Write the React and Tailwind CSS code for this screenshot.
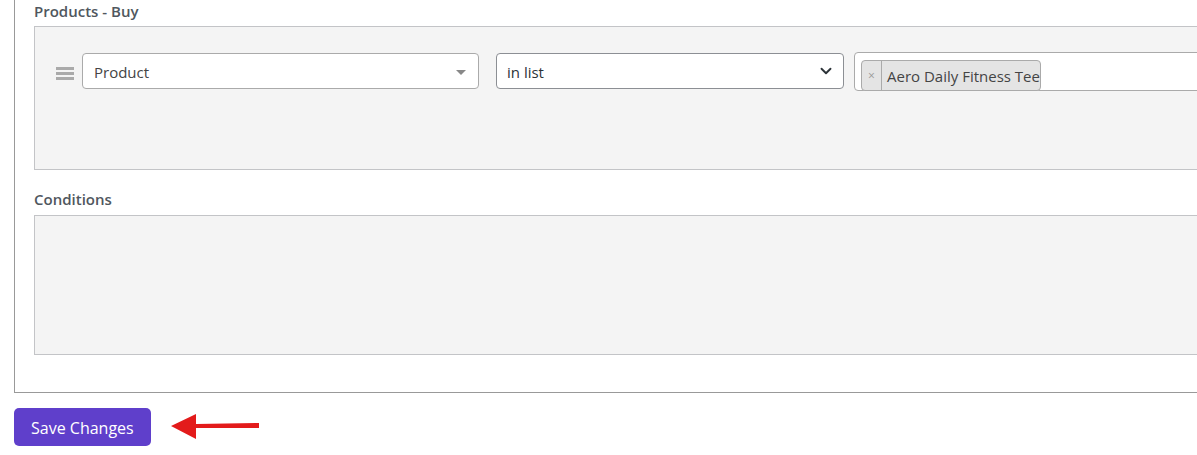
import { ChevronDown } from "lucide-react";

// --- Regla de producto ---
const RuleRow = () => (
  <div className="flex items-start">
    {/* asa de arrastre */}
    <div className="shrink-0 w-[18px] mt-[14px] flex flex-col gap-[2px]">
      <span className="block h-[3px] bg-[#aaa]" />
      <span className="block h-[3px] bg-[#aaa]" />
      <span className="block h-[3px] bg-[#aaa]" />
    </div>

    <div className="shrink-0 ml-[8px] w-[397px] h-[36px] bg-white border border-[#aaa] rounded-[4px] flex items-center justify-between pl-[11px] pr-[10px] pt-[2px] text-[15px] text-[#444]">
      <span>Product</span>
      <span className="w-0 h-0 border-l-[5px] border-r-[5px] border-t-[5px] border-l-transparent border-r-transparent border-t-[#888] mr-[2px]" />
    </div>

    <div className="shrink-0 ml-[17px] w-[348px] h-[36px] bg-white border border-[#8c8f94] rounded-[4px] flex items-center justify-between pl-[10px] pr-[8px] pt-[2px] text-[15px] text-[#2c3338]">
      <span>in list</span>
      <ChevronDown className="w-[18px] h-[18px] text-[#2c3338] -mt-[2px]" strokeWidth={2.5} />
    </div>

    <div className="shrink-0 ml-[10px] -mt-[1px] w-[420px] h-[39px] bg-white border border-[#aaa] rounded-[4px] flex items-start pl-[6px] pt-[7px]">
      <div className="h-[31px] flex items-stretch bg-[#e4e4e4] border border-[#aaa] rounded-[4px] text-[15px] text-[#444]">
        <span className="w-[20px] border-r border-[#aaa] flex items-center justify-center text-[12px] text-[#999]">×</span>
        <span className="pl-[5px] pt-px flex items-center">Aero Daily Fitness Tee</span>
      </div>
    </div>
  </div>
);

export default function App() {
  return (
    <div className="w-[1197px] h-[455px] overflow-hidden bg-white font-['Open_Sans',sans-serif]">
      <div className="ml-[14px] w-[1250px] border-l border-b border-[#999] pl-[19px] pb-[37px]">
        <h3 className="pt-px text-[15px] leading-[20px] font-semibold text-[#50575e]">Products - Buy</h3>
        <div className="mt-[5px] h-[144px] bg-[#f4f4f4] border border-[#c3c4c7] pl-[21px] pt-[26px]">
          <RuleRow />
        </div>

        <h3 className="mt-[19px] text-[15px] leading-[20px] font-semibold text-[#50575e]">Conditions</h3>
        <div className="mt-[6px] h-[140px] bg-[#f4f4f4] border border-[#c3c4c7]" />
      </div>

      <div className="mt-[15px] ml-[14px] flex items-center">
        <button className="h-[38px] px-[17px] pt-px bg-[#5f3fcb] rounded-[5px] text-white text-[16px]">
          Save Changes
        </button>
        <svg className="ml-[20px]" width="89" height="26" viewBox="0 0 89 26">
          <polygon points="0,12 25,0 25,10 88,9 88,14 25,14 25,25" fill="#e31b1b" />
        </svg>
      </div>
    </div>
  );
}
